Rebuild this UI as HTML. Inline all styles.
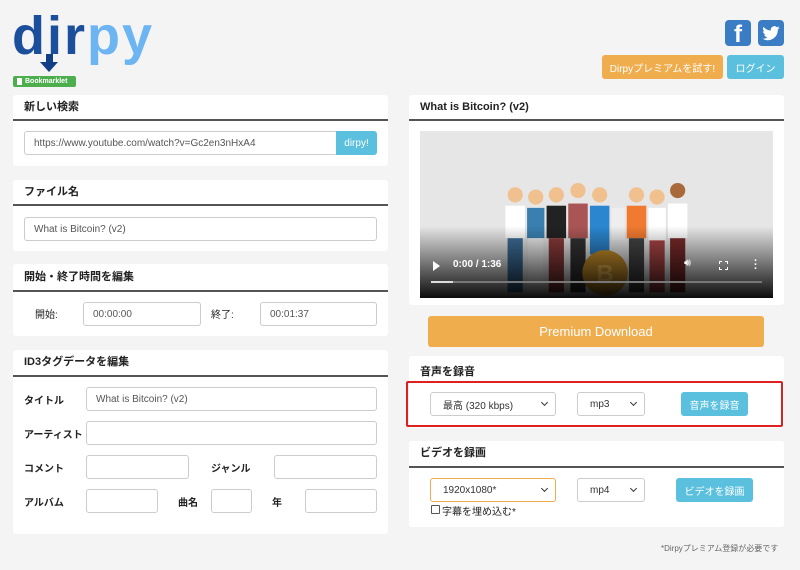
<!DOCTYPE html>
<html><head><meta charset="utf-8"><style>
*{box-sizing:border-box;margin:0;padding:0}
body{width:800px;height:570px;background:#f4f4f4;font-family:"Liberation Sans","Noto Sans CJK JP",sans-serif;position:relative;overflow:hidden;color:#222}
.a{position:absolute}
.p{position:absolute;background:#fff;border-radius:3px}
.h{position:absolute;left:0;right:0;top:0;border-bottom:2px solid #555;font-size:11px;font-weight:bold;padding-left:11px}
.i{position:absolute;border:1px solid #ccc;border-radius:3px;background:#fff;font-size:10px;color:#555;padding-left:9px;display:flex;align-items:center}
.l{position:absolute;font-size:10px;font-weight:bold;color:#222}
.s{position:absolute;border:1px solid #ccc;border-radius:3px;background:#fff;font-size:10px;color:#333;padding-left:12px;display:flex;align-items:center}
.s:after{content:"";position:absolute;right:8px;top:7px;width:4px;height:4px;border-right:1.5px solid #333;border-bottom:1.5px solid #333;transform:rotate(45deg)}
.b{position:absolute;background:#5bc0de;color:#fff;font-size:10px;border-radius:3px;display:flex;align-items:center;justify-content:center}
</style></head><body>
<!-- logo -->
<div class="a" style="left:12px;top:6px;font-size:54px;font-weight:bold;letter-spacing:2px;line-height:60px"><span style="color:#1b4f9c">dir</span><span style="color:#6cb4f2">py</span></div>
<div class="a" style="left:46px;top:54px;width:7px;height:9px;background:#123e85"></div>
<div class="a" style="left:40px;top:62px;width:0;height:0;border-left:9.5px solid transparent;border-right:9.5px solid transparent;border-top:10px solid #123e85"></div>
<div class="a" style="left:13px;top:76px;width:63px;height:11px;background:#4cae4c;border-radius:2px;color:#fff;font-size:7px;font-weight:bold;line-height:11px;padding-left:12px">Bookmarklet<span style="position:absolute;left:4px;top:2px;width:5px;height:7px;background:#fff"></span></div>
<!-- social -->
<div class="a" style="left:725px;top:20px;width:26px;height:26px;background:#3b7dc4;border-radius:4px;color:#fff;font-weight:bold;font-size:24px;text-align:center;line-height:30px;overflow:hidden">f</div>
<div class="a" style="left:758px;top:20px;width:26px;height:26px;background:#3b7dc4;border-radius:4px">
<svg width="26" height="26" viewBox="0 0 24 24"><path d="M20 7.2c-.6.3-1.2.4-1.9.5.7-.4 1.2-1 1.4-1.8-.6.4-1.3.6-2 .8a3.3 3.3 0 0 0-5.6 3A9.3 9.3 0 0 1 5.1 6.3a3.3 3.3 0 0 0 1 4.4c-.5 0-1-.2-1.5-.4 0 1.600 1.1 2.9 2.6 3.2-.5.1-1 .2-1.5.1.4 1.3 1.6 2.3 3.1 2.3A6.6 6.6 0 0 1 4 17.2a9.3 9.3 0 0 0 14.3-8.3c.7-.5 1.2-1 1.7-1.7z" fill="#fff"/></svg></div>
<div class="b" style="left:602px;top:55px;width:121px;height:24px;background:#f0ad4e">Dirpyプレミアムを試す!</div>
<div class="b" style="left:727px;top:55px;width:57px;height:24px">ログイン</div>
<!-- left panels -->
<div class="p" style="left:13px;top:95px;width:375px;height:71px">
<div class="h" style="height:26px;line-height:24px">新しい検索</div>
<div class="i" style="left:11px;top:36px;width:313px;height:24px;border-radius:3px 0 0 3px">https://www.youtube.com/watch?v=Gc2en3nHxA4</div>
<div class="b" style="left:323px;top:36px;width:41px;height:24px;border-radius:0 3px 3px 0">dirpy!</div>
</div>
<div class="p" style="left:13px;top:180px;width:375px;height:71px">
<div class="h" style="height:26px;line-height:24px">ファイル名</div>
<div class="i" style="left:11px;top:37px;width:353px;height:24px">What is Bitcoin? (v2)</div>
</div>
<div class="p" style="left:13px;top:264px;width:375px;height:72px">
<div class="h" style="height:28px;line-height:26px">開始・終了時間を編集</div>
<div class="l" style="left:22px;top:42px;font-weight:normal">開始:</div>
<div class="i" style="left:70px;top:38px;width:118px;height:24px">00:00:00</div>
<div class="l" style="left:198px;top:42px;font-weight:normal">終了:</div>
<div class="i" style="left:247px;top:38px;width:117px;height:24px">00:01:37</div>
</div>
<div class="p" style="left:13px;top:350px;width:375px;height:184px">
<div class="h" style="height:27px;line-height:25px">ID3タグデータを編集</div>
<div class="l" style="left:11px;top:42px">タイトル</div>
<div class="i" style="left:73px;top:37px;width:291px;height:24px">What is Bitcoin? (v2)</div>
<div class="l" style="left:11px;top:76px">アーティスト</div>
<div class="i" style="left:73px;top:71px;width:291px;height:24px"></div>
<div class="l" style="left:11px;top:110px">コメント</div>
<div class="i" style="left:73px;top:105px;width:103px;height:24px"></div>
<div class="l" style="left:198px;top:110px">ジャンル</div>
<div class="i" style="left:261px;top:105px;width:103px;height:24px"></div>
<div class="l" style="left:11px;top:144px">アルバム</div>
<div class="i" style="left:73px;top:139px;width:72px;height:24px"></div>
<div class="l" style="left:165px;top:144px">曲名</div>
<div class="i" style="left:198px;top:139px;width:41px;height:24px"></div>
<div class="l" style="left:259px;top:144px">年</div>
<div class="i" style="left:292px;top:139px;width:72px;height:24px"></div>
</div>
<!-- right -->
<div class="p" style="left:409px;top:95px;width:375px;height:210px">
<div class="h" style="height:26px;line-height:24px">What is Bitcoin? (v2)</div>
<div class="a" style="left:11px;top:36px;width:353px;height:167px;background:#e6e6e6;overflow:hidden">
<svg class="a" style="left:80px;top:42px" width="195" height="125" viewBox="0 0 180 115">
<g>
<rect x="5" y="30" width="18" height="30" fill="#fff"/><rect x="7" y="60" width="14" height="50" fill="#3d6e9a"/><circle cx="14" cy="20" r="7" fill="#f1c08f"/>
<rect x="25" y="32" width="16" height="28" fill="#3a7fb0"/><rect x="26" y="60" width="14" height="50" fill="#eee"/><circle cx="33" cy="22" r="7" fill="#f1c08f"/>
<rect x="43" y="30" width="18" height="30" fill="#222"/><rect x="45" y="60" width="14" height="50" fill="#8b3a3a"/><circle cx="52" cy="20" r="7" fill="#f1c08f"/>
<rect x="63" y="28" width="18" height="32" fill="#a55"/><rect x="65" y="60" width="14" height="50" fill="#333"/><circle cx="72" cy="16" r="7" fill="#f1c08f"/>
<rect x="83" y="30" width="18" height="45" fill="#2b86cf"/><rect x="86" y="75" width="12" height="35" fill="#f1c08f"/><circle cx="92" cy="20" r="7" fill="#f1c08f"/>
<rect x="103" y="32" width="12" height="30" fill="#eee"/>
<rect x="117" y="30" width="18" height="30" fill="#f07a30"/><rect x="119" y="60" width="14" height="50" fill="#444"/><circle cx="126" cy="20" r="7" fill="#f1c08f"/>
<rect x="137" y="32" width="16" height="30" fill="#fff"/><rect x="138" y="62" width="14" height="48" fill="#a44"/><circle cx="145" cy="22" r="7" fill="#f1c08f"/>
<rect x="155" y="28" width="18" height="32" fill="#fff"/><rect x="157" y="60" width="14" height="50" fill="#7a2a2a"/><circle cx="164" cy="16" r="7" fill="#a86a3a"/>
<circle cx="97" cy="92" r="21" fill="#c8902a"/><text x="97" y="100" font-size="22" font-weight="bold" fill="#e8b85a" text-anchor="middle" font-family="Liberation Sans">B</text>
</g></svg>
<div class="a" style="left:0;top:95px;width:353px;height:72px;background:linear-gradient(rgba(0,0,0,0),rgba(0,0,0,.95))"></div>
<div class="a" style="left:13px;top:130px;width:0;height:0;border-top:5px solid transparent;border-bottom:5px solid transparent;border-left:7px solid #fff"></div>
<div class="a" style="left:33px;top:128px;color:#fff;font-size:10px;font-weight:bold">0:00 / 1:36</div>
<div class="a" style="left:264px;top:126px;color:#fff;font-size:11px">🔊︎</div>
<div class="a" style="left:299px;top:130px;width:9px;height:9px;border:1.5px dashed #fff"></div>
<div class="a" style="left:334px;top:128px;color:#fff;font-size:11px;font-weight:bold;line-height:4px">·<br>·<br>·</div>
<div class="a" style="left:11px;top:150px;width:331px;height:2px;background:#777"></div>
<div class="a" style="left:11px;top:150px;width:22px;height:2px;background:#ddd"></div>
</div>
</div>
<div class="b" style="left:428px;top:316px;width:336px;height:31px;background:#f0ad4e;font-size:13px">Premium Download</div>
<div class="p" style="left:409px;top:356px;width:375px;height:72px">
<div class="a" style="left:11px;top:7px;font-size:11px;font-weight:bold">音声を録音</div>
</div>
<div class="a" style="left:406px;top:381px;width:377px;height:46px;border:2px solid #e02020;border-radius:2px"></div>
<div class="s" style="left:430px;top:392px;width:126px;height:24px">最高 (320 kbps)</div>
<div class="s" style="left:577px;top:392px;width:68px;height:24px">mp3</div>
<div class="b" style="left:681px;top:392px;width:67px;height:24px">音声を録音</div>
<div class="p" style="left:409px;top:441px;width:375px;height:86px">
<div class="h" style="height:27px;line-height:25px">ビデオを録画</div>
</div>
<div class="s" style="left:430px;top:478px;width:126px;height:24px;border-color:#f0ad4e">1920x1080*</div>
<div class="s" style="left:577px;top:478px;width:68px;height:24px">mp4</div>
<div class="b" style="left:676px;top:478px;width:77px;height:24px">ビデオを録画</div>
<div class="a" style="left:431px;top:505px;width:9px;height:9px;border:1px solid #555;border-radius:1px;background:#fff"></div>
<div class="a" style="left:442px;top:503px;font-size:10px">字幕を埋め込む*</div>
<div class="a" style="left:661px;top:543px;font-size:8px;color:#666">*Dirpyプレミアム登録が必要です</div>
</body></html>
